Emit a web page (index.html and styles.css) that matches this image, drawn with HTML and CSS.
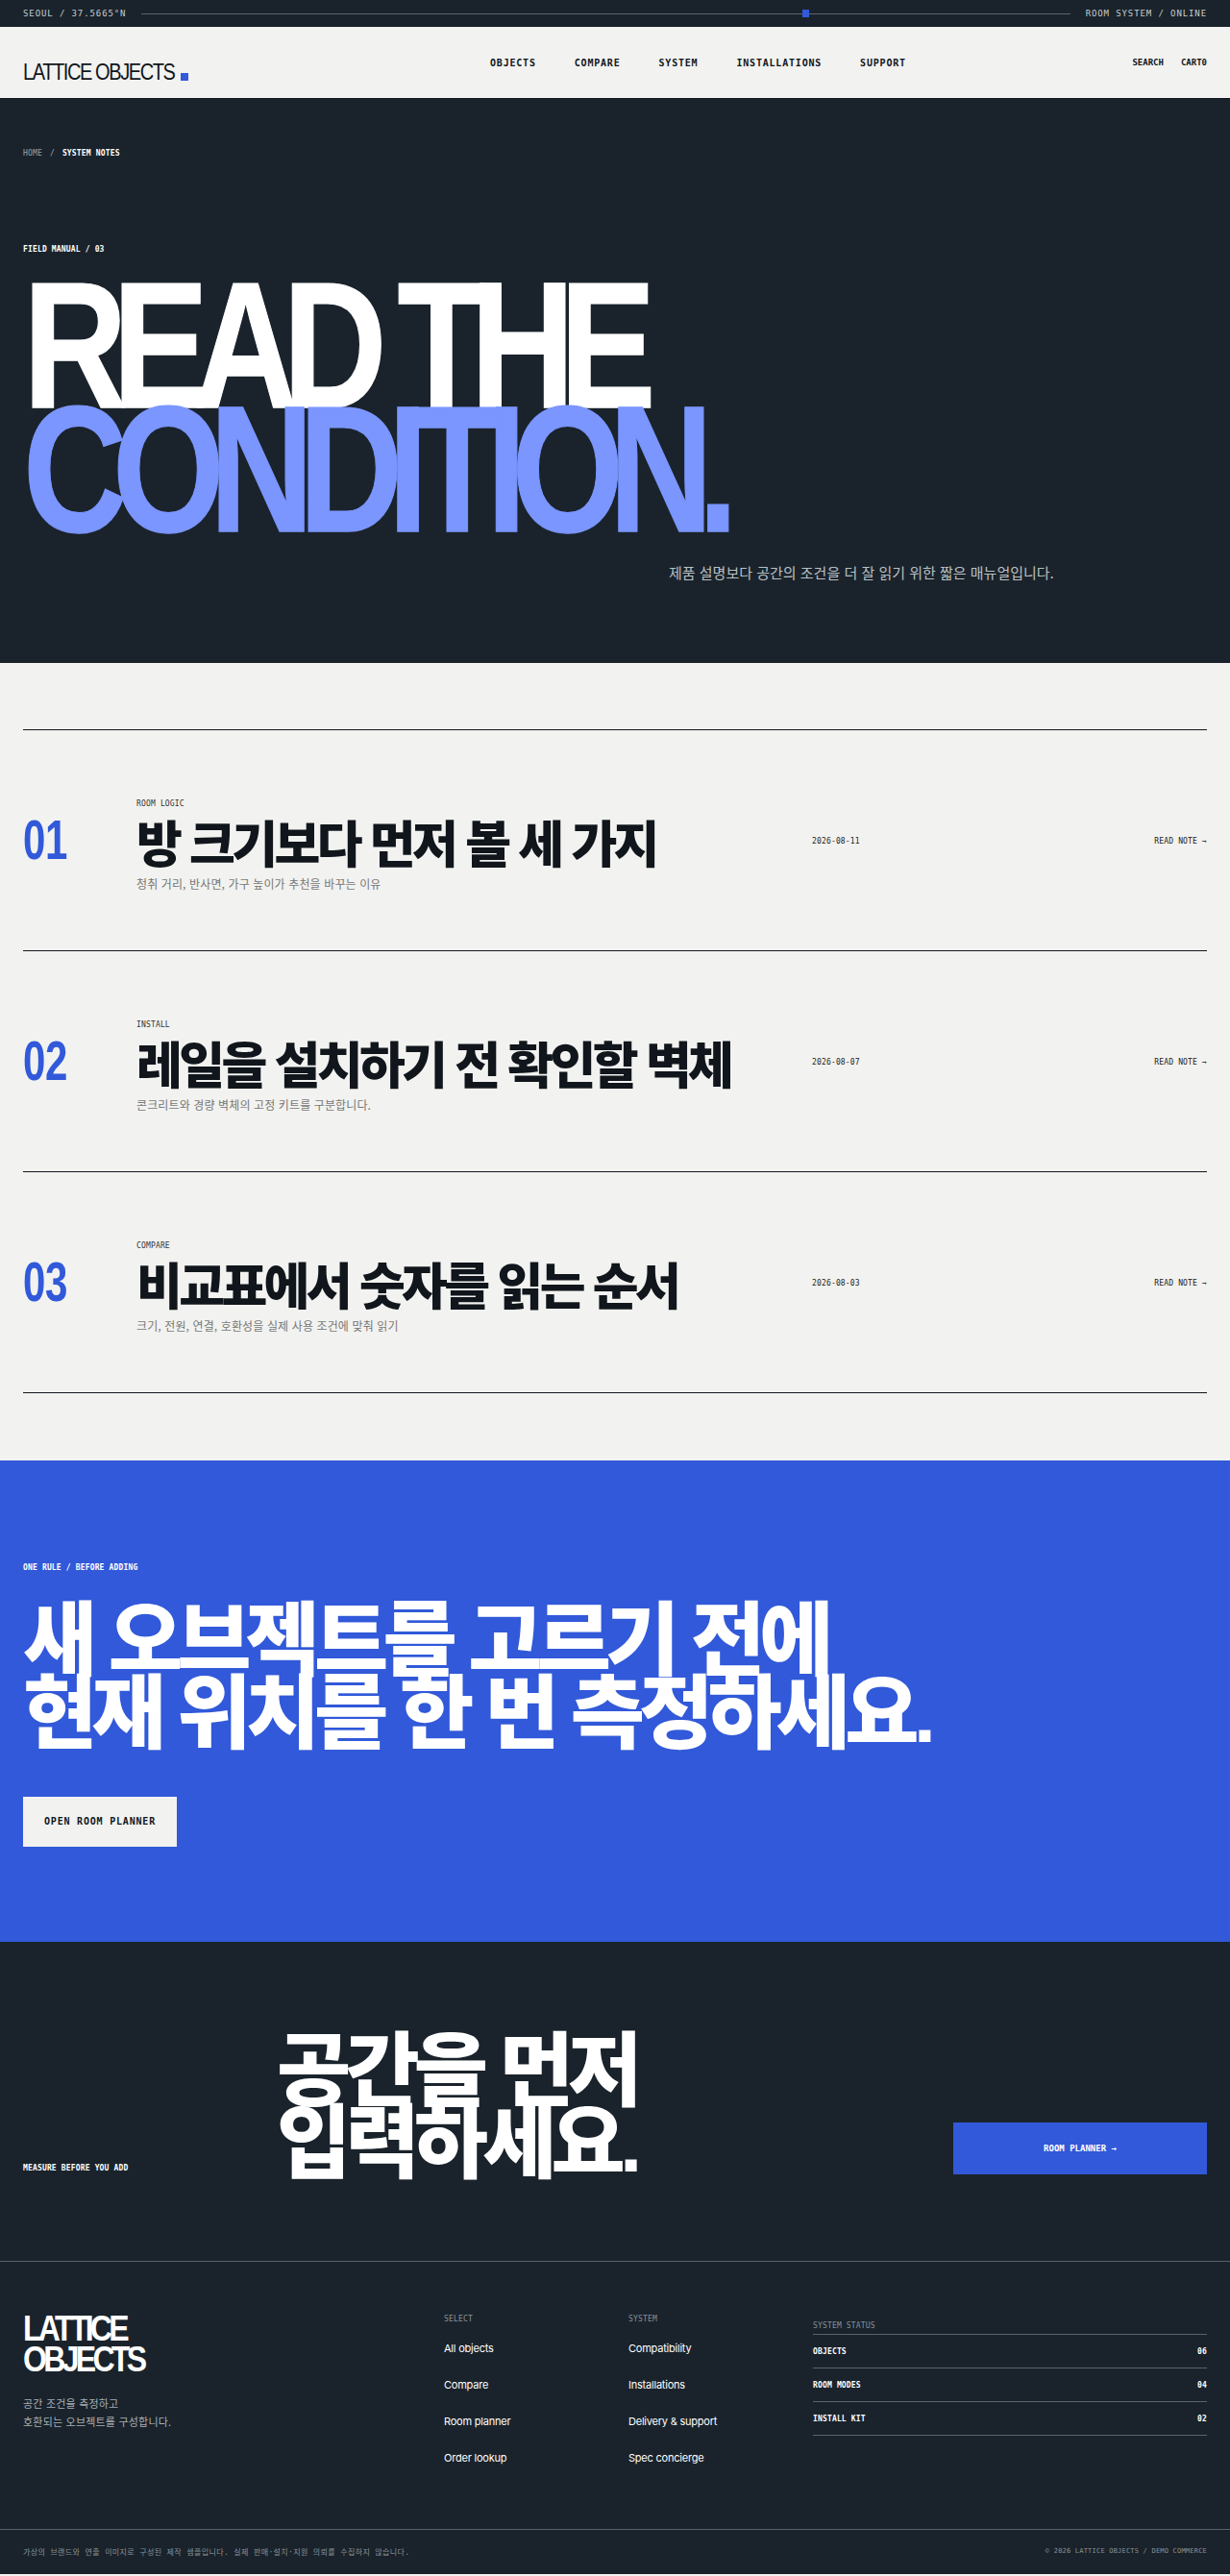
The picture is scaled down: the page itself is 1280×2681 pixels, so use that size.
FILE: index.html
```html
<!DOCTYPE html>
<html lang="ko">
<head>
    <title>Lattice Objects - System Notes</title>
    <link rel="stylesheet" href="styles.css">
</head>
<body>
    <div class="topbar">
        <span>SEOUL / 37.5665°N</span>
        <div class="topbar-line"><i class="topbar-dot"></i></div>
        <span>ROOM SYSTEM / ONLINE</span>
    </div>

    <header class="header">
        <a class="logo"><span class="logo-text">LATTICE OBJECTS</span><i class="logo-dot"></i></a>
        <nav class="nav">
            <a>OBJECTS</a>
            <a>COMPARE</a>
            <a>SYSTEM</a>
            <a>INSTALLATIONS</a>
            <a>SUPPORT</a>
        </nav>
        <div class="header-tools">
            <a>SEARCH</a>
            <a>CART0</a>
        </div>
    </header>

    <section class="hero">
        <div class="crumbs"><span class="crumb-home">HOME</span><span class="crumb-home">/</span><b>SYSTEM NOTES</b></div>
        <div class="hero-label">FIELD MANUAL / 03</div>
        <h1 class="hero-title">READ THE<br><em>CONDITION.</em></h1>
        <p class="hero-sub">제품 설명보다 공간의 조건을 더 잘 읽기 위한 짧은 매뉴얼입니다.</p>
    </section>

    <section class="notes">
        <article class="note">
            <div class="note-num">01</div>
            <div class="note-body">
                <div class="note-tag">ROOM LOGIC</div>
                <h2 class="note-title">방 크기보다 먼저 볼 세 가지</h2>
                <p class="note-desc">청취 거리, 반사면, 가구 높이가 추천을 바꾸는 이유</p>
            </div>
            <div class="note-date">2026-08-11</div>
            <a class="note-link">READ NOTE →</a>
        </article>
        <article class="note">
            <div class="note-num">02</div>
            <div class="note-body">
                <div class="note-tag">INSTALL</div>
                <h2 class="note-title">레일을 설치하기 전 확인할 벽체</h2>
                <p class="note-desc">콘크리트와 경량 벽체의 고정 키트를 구분합니다.</p>
            </div>
            <div class="note-date">2026-08-07</div>
            <a class="note-link">READ NOTE →</a>
        </article>
        <article class="note">
            <div class="note-num">03</div>
            <div class="note-body">
                <div class="note-tag">COMPARE</div>
                <h2 class="note-title">비교표에서 숫자를 읽는 순서</h2>
                <p class="note-desc">크기, 전원, 연결, 호환성을 실제 사용 조건에 맞춰 읽기</p>
            </div>
            <div class="note-date">2026-08-03</div>
            <a class="note-link">READ NOTE →</a>
        </article>
    </section>

    <section class="rule">
        <div class="rule-label">ONE RULE / BEFORE ADDING</div>
        <h2 class="big-title">새 오브젝트를 고르기 전에<br>현재 위치를 한 번 측정하세요.</h2>
        <a class="rule-btn">OPEN ROOM PLANNER</a>
    </section>

    <section class="cta">
        <div class="cta-label">MEASURE BEFORE YOU ADD</div>
        <h2 class="big-title">공간을 먼저<br>입력하세요.</h2>
        <a class="cta-btn">ROOM PLANNER →</a>
    </section>

    <footer class="footer">
        <div class="footer-main">
            <div>
                <div class="footer-logo">LATTICE<br>OBJECTS</div>
                <p class="footer-text">공간 조건을 측정하고<br>호환되는 오브젝트를 구성합니다.</p>
            </div>
            <div class="footer-col">
                <h4>SELECT</h4>
                <a>All objects</a>
                <a>Compare</a>
                <a>Room planner</a>
                <a>Order lookup</a>
            </div>
            <div class="footer-col">
                <h4>SYSTEM</h4>
                <a>Compatibility</a>
                <a>Installations</a>
                <a>Delivery &amp; support</a>
                <a>Spec concierge</a>
            </div>
            <div class="status">
                <h4>SYSTEM STATUS</h4>
                <div class="status-row"><span>OBJECTS</span><span>06</span></div>
                <div class="status-row"><span>ROOM MODES</span><span>04</span></div>
                <div class="status-row"><span>INSTALL KIT</span><span>02</span></div>
            </div>
        </div>
        <div class="footer-bottom">
            <span class="footer-note">가상의 브랜드와 연출 이미지로 구성된 제작 샘플입니다. 실제 판매·설치·지원 의뢰를 수집하지 않습니다.</span>
            <span class="footer-copy">© 2026 LATTICE OBJECTS / DEMO COMMERCE</span>
        </div>
    </footer>
</body>
</html>
```

FILE: styles.css
```css
* {
    box-sizing: border-box;
}
body {
    margin: 0;
    background-color: #f2f2f0;
    color: #10161b;
    font-family: "Noto Sans CJK KR", "Noto Sans", sans-serif;
}
h1, h2, h4, p {
    margin: 0;
}
.topbar, .nav, .header-tools, .crumbs, .hero-label, .note-tag, .note-date, .note-link,
.rule-label, .rule-btn, .cta-label, .cta-btn, .footer-col h4, .status, .footer-note, .footer-copy {
    font-family: "DejaVu Sans Mono", "Noto Sans CJK KR", monospace;
}

.topbar {
    height: 28px;
    padding: 0 24px;
    background-color: #1a232b;
    color: #c7ccd0;
    display: flex;
    align-items: center;
    gap: 16px;
    font-size: 9px;
    letter-spacing: 0.1em;
}
.topbar-line {
    flex: 1;
    height: 1px;
    background-color: #59636b;
    display: flex;
    align-items: center;
    padding-left: 688px;
}
.topbar-dot {
    width: 7px;
    height: 8px;
    background-color: #3159d9;
}

.header {
    height: 75px;
    padding: 0 24px;
    display: grid;
    grid-template-columns: 486px 1fr auto;
    align-items: center;
    border-bottom: 1px solid #10161b;
}
.logo {
    font-family: "Liberation Sans", sans-serif;
    font-size: 20px;
    letter-spacing: -0.07em;
    line-height: 1;
    margin-top: 21px;
    display: flex;
    align-items: flex-end;
    gap: 6px;
}
.logo-text {
    transform: scaleY(1.16);
    transform-origin: 0 100%;
}
.logo-dot {
    width: 8px;
    height: 8px;
    background-color: #3159d9;
    margin-bottom: 2px;
}
.nav {
    display: flex;
    gap: 40px;
    font-size: 10px;
    font-weight: 700;
    letter-spacing: 0.08em;
}
.header-tools {
    display: flex;
    gap: 18px;
    font-size: 9px;
    font-weight: 700;
}

.hero {
    height: 587px;
    padding: 51px 24px 0;
    background-color: #1a232b;
    color: #fff;
}
.crumbs {
    display: flex;
    gap: 8px;
    font-size: 8px;
    line-height: 12px;
    letter-spacing: 0.02em;
}
.crumb-home {
    color: #9aa3a9;
}
.hero-label {
    margin-top: 88px;
    font-size: 8px;
    line-height: 12px;
    font-weight: 700;
    letter-spacing: 0.02em;
}
.hero-title {
    margin: 29px 0 0;
    font-family: "Liberation Sans", sans-serif;
    font-size: 150px;
    line-height: 0.688;
    font-weight: 700;
    letter-spacing: -0.103em;
    -webkit-text-stroke: 1px currentColor;
    transform: scaleY(1.25);
    transform-origin: 0 0;
}
.hero-title em {
    font-style: normal;
    color: #7b96ff;
}
.hero-sub {
    margin: 83px 0 0 672px;
    font-size: 15px;
    line-height: 24px;
    color: #b9c0c4;
}

.notes {
    padding: 69px 24px 70px;
}
.note {
    height: 230px;
    border-top: 1px solid #10161b;
    display: grid;
    grid-template-columns: 118px 703px 1fr auto;
    align-items: center;
}
.note:last-child {
    height: 231px;
    border-bottom: 1px solid #10161b;
}
.note-num {
    padding-top: 1px;
    font-family: "Liberation Sans", sans-serif;
    font-size: 42px;
    font-weight: 700;
    letter-spacing: -0.01em;
    color: #3159d9;
    transform: scaleY(1.36);
}
.note-body {
    padding-top: 12px;
}
.note-tag {
    font-size: 8px;
    line-height: 12px;
    letter-spacing: 0.02em;
    color: #333;
}
.note-title {
    margin: 4px 0 5px;
    font-size: 52px;
    line-height: 58px;
    font-weight: 900;
    letter-spacing: -0.07em;
}
.note-desc {
    font-size: 12px;
    line-height: 20px;
    letter-spacing: 0.01em;
    color: #777;
}
.note-date, .note-link {
    padding-top: 2px;
    font-size: 8px;
    letter-spacing: 0.02em;
    color: #222;
}

.rule {
    height: 501px;
    padding: 106px 24px 0;
    background-color: #3159d9;
    color: #fff;
}
.rule-label {
    font-size: 8px;
    line-height: 12px;
    font-weight: 700;
    letter-spacing: 0.02em;
}
.big-title {
    font-family: "Liberation Sans", "Noto Sans CJK KR", sans-serif;
    font-size: 84px;
    line-height: 0.9;
    font-weight: 900;
    letter-spacing: -0.07em;
}
.rule .big-title {
    margin-top: 33px;
}
.rule-btn {
    display: block;
    width: 160px;
    height: 52px;
    margin-top: 48px;
    background-color: #f2f2f0;
    color: #10161b;
    font-size: 10px;
    font-weight: 700;
    line-height: 52px;
    letter-spacing: 0.08em;
    text-align: center;
}

.cta {
    height: 333px;
    padding: 0 24px 90px;
    background-color: #1a232b;
    color: #fff;
    border-bottom: 1px solid #59636b;
    display: grid;
    grid-template-columns: 264px 1fr 264px;
    align-items: end;
}
.cta .big-title {
    margin-bottom: -7px;
}
.cta-label {
    font-size: 8px;
    line-height: 12px;
    font-weight: 700;
    letter-spacing: 0.02em;
}
.cta-btn {
    height: 54px;
    background-color: #3159d9;
    font-size: 9px;
    line-height: 54px;
    text-align: center;
    font-weight: 700;
}

.footer {
    background-color: #1a232b;
    color: #fff;
    height: 325px;
}
.footer-main {
    height: 279px;
    padding: 54px 24px 0;
    display: grid;
    grid-template-columns: 438px 192px 192px 1fr;
    border-bottom: 1px solid #59636b;
}
.footer-logo {
    font-family: "Liberation Sans", sans-serif;
    font-size: 32px;
    font-weight: 700;
    line-height: 27px;
    letter-spacing: -0.115em;
    transform: scaleY(1.18);
    transform-origin: 0 0;
}
.footer-text {
    margin-top: 30px;
    font-size: 11px;
    line-height: 19px;
    letter-spacing: 0.2px;
    color: #a9b0b5;
}
.footer-col {
    display: flex;
    flex-direction: column;
    align-items: flex-start;
    font-family: Inter, sans-serif;
    font-size: 11px;
    letter-spacing: -0.02em;
}
.footer-col h4 {
    font-size: 8px;
    line-height: 12px;
    font-weight: 400;
    letter-spacing: 0.02em;
    color: #8a9299;
    margin-bottom: 14px;
}
.footer-col a {
    height: 38px;
    line-height: 20px;
}
.status {
    padding-top: 7px;
    font-size: 8px;
    letter-spacing: 0.02em;
}
.status h4 {
    font-weight: 400;
    line-height: 12px;
    color: #8a9299;
    padding-bottom: 2px;
    border-bottom: 1px solid #59636b;
}
.status-row {
    height: 35px;
    border-bottom: 1px solid #59636b;
    display: flex;
    justify-content: space-between;
    align-items: center;
    font-weight: 700;
}
.footer-bottom {
    height: 44px;
    padding: 0 24px;
    display: flex;
    justify-content: space-between;
    align-items: center;
}
.footer-note {
    font-size: 8px;
    color: #8a9299;
    letter-spacing: 0.37px;
}
.footer-copy {
    font-size: 7px;
    letter-spacing: 0.03em;
    color: #8a9299;
}
```
